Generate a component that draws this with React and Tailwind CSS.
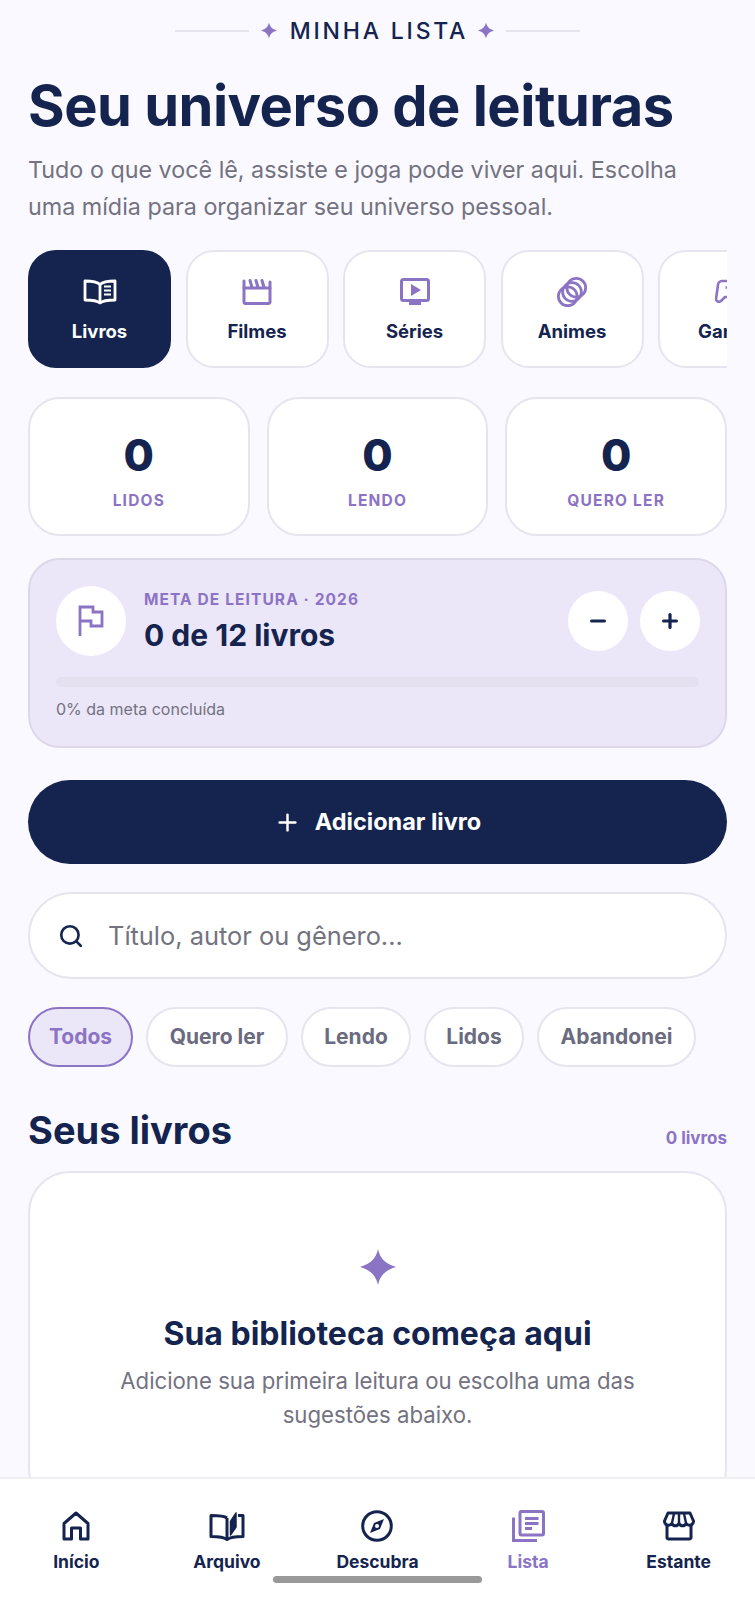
import React from 'react';
import { Plus, Search, Minus } from 'lucide-react';

const tabs = [
  { label: 'Livros', icon: BookIcon, active: true },
  { label: 'Filmes', icon: FilmIcon },
  { label: 'Séries', icon: TvIcon },
  { label: 'Animes', icon: RingsIcon },
  { label: 'Games', icon: GameIcon },
];

const chips = [
  { label: 'Todos', w: 'w-[105px]', active: true },
  { label: 'Quero ler', w: 'w-[142px]' },
  { label: 'Lendo', w: 'w-[110px]' },
  { label: 'Lidos', w: 'w-[100px]' },
  { label: 'Abandonei', w: 'w-[159px]' },
];

const navItems = [
  { label: 'Início', icon: HomeIcon },
  { label: 'Arquivo', icon: ArchiveIcon },
  { label: 'Descubra', icon: CompassIcon },
  { label: 'Lista', icon: ListIcon, active: true },
  { label: 'Estante', icon: StoreIcon },
];

function BookIcon() {
  return (
    <svg width="34" height="26" viewBox="0 0 34 26" fill="none" stroke="currentColor" strokeWidth="2.8" strokeLinejoin="round">
      <path d="M17 5.500C14.500 3 10 2 2 2v19c8 0 12.500 .8 15 3 2.500-2.200 7-3 15-3V2C24 2 19.500 3 17 5.500z" />
      <path d="M17 5.500V24" />
      <path d="M21 7.500h7M21 11.500h7M21 15.500h7" strokeWidth="2.200" />
    </svg>
  );
}

function FilmIcon() {
  return (
    <svg width="30" height="26" viewBox="0 0 30 26" fill="none" stroke="currentColor" strokeWidth="3" strokeLinejoin="round">
      <path d="M2 9h26v14a1.500 1.500 0 0 1-1.500 1.500h-23A1.500 1.500 0 0 1 2 23z" />
      <path d="M2 9V2M28 9V3M8 1.500l2 7M14 1.500l2 7M20 1.500l2 7" strokeLinecap="round" />
    </svg>
  );
}

function TvIcon() {
  return (
    <svg width="30" height="28" viewBox="0 0 30 28" fill="none">
      <rect x="1.500" y="1.500" width="27" height="21" rx="2" stroke="currentColor" strokeWidth="3" />
      <path d="M11 6 21 12 11 18z" fill="currentColor" />
      <path d="M9 25.500h12" stroke="currentColor" strokeWidth="3" />
    </svg>
  );
}

function RingsIcon() {
  return (
    <svg width="32" height="32" viewBox="0 0 30 30" fill="none" stroke="currentColor" strokeWidth="2.600">
      <circle cx="11" cy="19" r="8.800" />
      <circle cx="15" cy="15" r="8.800" />
      <circle cx="19" cy="11" r="8.800" />
    </svg>
  );
}

function GameIcon() {
  return (
    <svg width="30" height="28" viewBox="0 0 30 28" fill="none" stroke="currentColor" strokeWidth="2.600" strokeLinejoin="round">
      <path d="M7 3h17a4 4 0 0 1 4 4l1 14a3 3 0 0 1-5 2l-4-4H10l-4 4a3 3 0 0 1-5-2L3 7a4 4 0 0 1 4-4z" />
      <path d="M14 6v7M10.500 9.500h7" />
    </svg>
  );
}

function FlagIcon() {
  return (
    <svg width="26" height="32" viewBox="0 0 26 32" fill="none" stroke="currentColor" strokeWidth="2.800" strokeLinejoin="miter">
      <path d="M2 31V2h13v5h9v14H13v-5H2" />
    </svg>
  );
}

function HomeIcon() {
  return (
    <svg width="28" height="30" viewBox="0 0 28 30" fill="none" stroke="currentColor" strokeWidth="3" strokeLinejoin="round">
      <path d="M2 12.500 14 2l12 10.500V28h-7.500V17h-9v11H2z" />
    </svg>
  );
}

function ArchiveIcon() {
  return (
    <svg width="36" height="32" viewBox="0 0 36 32" fill="none" stroke="currentColor" strokeWidth="3" strokeLinejoin="round">
      <path d="M18 8C15.500 6 10 5.500 2 5.500v21c8 0 13 .5 16 3 3-2.500 8-3 16-3v-21h-5" />
      <path d="M18 8v21" />
      <path d="M21.500 25V11.500L27 3v14z" fill="currentColor" strokeWidth="1.500" />
    </svg>
  );
}

function CompassIcon() {
  return (
    <svg width="32" height="32" viewBox="0 0 32 32" fill="none">
      <circle cx="16" cy="16" r="14.300" stroke="currentColor" strokeWidth="3" />
      <path d="M23 9 19 19 9 23 13 13z" fill="currentColor" />
      <circle cx="16" cy="16" r="2" fill="white" />
    </svg>
  );
}

function ListIcon() {
  return (
    <svg width="33" height="32" viewBox="0 0 33 32" fill="none" stroke="currentColor" strokeWidth="3">
      <rect x="8" y="1.500" width="23.500" height="23.500" rx="1.500" />
      <path d="M1.500 7.500V30.500H25" />
      <path d="M13 8.500h13.500M13 13.500h13.500M13 18.500h7" />
    </svg>
  );
}

function StoreIcon() {
  return (
    <svg width="32" height="30" viewBox="0 0 32 30" fill="none" stroke="currentColor" strokeWidth="3" strokeLinejoin="round">
      <path d="M5 2h22l3.500 8a4 4 0 0 1-7.300 2.500 4 4 0 0 1-7.200 0 4 4 0 0 1-7.200 0A4 4 0 0 1 1.500 10z" />
      <path d="M11 2.500 9 12M16 2.500V12M21 2.500 23 12" strokeWidth="2.400" />
      <path d="M4 14v12.500A1.500 1.500 0 0 0 5.500 28h21a1.500 1.500 0 0 0 1.500-1.500V14" />
    </svg>
  );
}

function Sparkle({ className }) {
  return (
    <svg className={className} viewBox="0 0 24 24" fill="currentColor">
      <path d="M12 0c1.500 6.500 4.500 9.500 12 12-7.500 2.500-10.500 5.500-12 12-1.500-6.500-4.500-9.500-12-12 7.500-2.500 10.500-5.500 12-12z" />
    </svg>
  );
}

export default function App() {
  return (
    <div className="relative h-[1600px] w-[755px] overflow-hidden bg-[#faf9ff] font-['Inter',sans-serif] text-[#14244f]">
      <div className="flex h-[41px] items-center justify-center pt-[20px]">
        <div className="h-[2px] w-[74px] bg-[#e6e4ee]" />
        <Sparkle className="ml-[12px] h-[17px] w-[16px] text-[#8b74c4]" />
        <span className="ml-[13px] mr-[10px] text-[23px] leading-[20px] font-medium tracking-[2.800px]">MINHA LISTA</span>
        <Sparkle className="mr-[12px] h-[17px] w-[16px] text-[#8b74c4]" />
        <div className="h-[2px] w-[74px] bg-[#e6e4ee]" />
      </div>

      <div className="px-[28px]">
        <h1 className="mt-[33px] text-[56px] leading-[64px] font-bold tracking-[-0.5px]">Seu universo de leituras</h1>
        <p className="mt-[13px] text-[23.300px] leading-[37px] text-[#73727f]">
          Tudo o que você lê, assiste e joga pode viver aqui. Escolha uma mídia para organizar seu universo pessoal.
        </p>

        <div className="mt-[25px] flex gap-[14.500px] overflow-hidden">
          {tabs.map((tab) => (
            <div
              key={tab.label}
              className={`flex h-[118px] w-[143px] shrink-0 flex-col items-center rounded-[28px] border-2 pt-[24px] ${tab.active ? 'border-[#14244f] bg-[#14244f] text-white' : 'border-[#e6e4ee] bg-white text-[#14244f]'}`}
            >
              <span className={`flex h-[32px] items-center justify-center ${tab.active ? '' : 'text-[#8b74c4]'}`}>
                <tab.icon />
              </span>
              <span className="mt-[11px] text-[18.500px] leading-[24px] font-bold">{tab.label}</span>
            </div>
          ))}
        </div>

        <div className="mt-[29px] grid grid-cols-3 gap-[17px]">
          {['LIDOS', 'LENDO', 'QUERO LER'].map((label) => (
            <div key={label} className="flex h-[139px] flex-col items-center rounded-[32px] border-2 border-[#e6e4ee] bg-white pt-[30px]">
              <span className="text-[44px] leading-[52px] font-extrabold">0</span>
              <span className="mt-[10px] text-[15.500px] leading-[20px] font-bold tracking-[1.200px] text-[#8b74c4]">{label}</span>
            </div>
          ))}
        </div>

        <div className="mt-[22px] h-[190px] rounded-[32px] border-2 border-[#dcd8ea] bg-[#ece7f8] px-[26px] pt-[26px]">
          <div className="flex items-center">
            <div className="flex h-[70px] w-[70px] items-center justify-center rounded-full bg-white text-[#8b74c4]">
              <FlagIcon />
            </div>
            <div className="ml-[18px]">
              <div className="text-[15.500px] leading-[20px] font-bold tracking-[1.100px] text-[#8b74c4]">META DE LEITURA · 2026</div>
              <div className="mt-[7px] text-[30px] leading-[36px] font-bold">0 de 12 livros</div>
            </div>
            <div className="ml-auto -mr-[1px] flex gap-[12px]">
              <div className="flex h-[60px] w-[60px] items-center justify-center rounded-full bg-white"><Minus size={22} strokeWidth={3.500} /></div>
              <div className="flex h-[60px] w-[60px] items-center justify-center rounded-full bg-white"><Plus size={22} strokeWidth={3.500} /></div>
            </div>
          </div>
          <div className="mt-[21px] h-[10px] rounded-full bg-[#e4e0f0]" />
          <div className="mt-[12px] text-[16px] leading-[20px] text-[#73727f]">0% da meta concluída</div>
        </div>

        <div className="mt-[32px] flex h-[84px] items-center justify-center gap-[14px] rounded-full bg-[#14244f] text-white">
          <Plus size={27} strokeWidth={2.200} />
          <span className="text-[23.500px] leading-[30px] font-bold">Adicionar livro</span>
        </div>

        <div className="mt-[28px] flex h-[87px] items-center rounded-full border-2 border-[#e6e4ee] bg-white pl-[28px]">
          <Search size={26} strokeWidth={2.400} />
          <span className="ml-[24px] text-[25.400px] leading-[32px] text-[#73727f]">Título, autor ou gênero...</span>
        </div>

        <div className="mt-[28px] flex gap-[13px]">
          {chips.map((chip) => (
            <div
              key={chip.label}
              className={`flex h-[60px] items-center justify-center rounded-full border-2 text-[21px] font-bold ${chip.w} ${chip.active ? 'border-[#8b74c4] bg-[#ece7f8] text-[#8b74c4]' : 'border-[#e6e4ee] bg-white text-[#6b6b80]'}`}
            >
              {chip.label}
            </div>
          ))}
        </div>

        <div className="mt-[39px] flex items-end justify-between">
          <h2 className="text-[38px] leading-[48px] font-bold">Seus livros</h2>
          <span className="mb-[6px] text-[17px] leading-[20px] font-bold text-[#8b74c4]">0 livros</span>
        </div>

        <div className="mt-[17px] flex h-[340px] flex-col items-center rounded-[42px] border-2 border-[#e6e4ee] bg-white pt-[75px] text-center">
          <Sparkle className="h-[38px] w-[36px] text-[#8b74c4]" />
          <h3 className="mt-[28px] text-[32px] leading-[40px] font-bold">Sua biblioteca começa aqui</h3>
          <p className="mt-[10px] w-[560px] text-[22.200px] leading-[33.500px] text-[#73727f]">
            Adicione sua primeira leitura ou escolha uma das sugestões abaixo.
          </p>
        </div>
      </div>

      {/* bottom nav sits on top of the empty-state card */}
      <nav className="absolute inset-x-0 bottom-0 h-[123px] border-t-2 border-[#efeef3] bg-white">
        <div className="grid grid-cols-5 px-[1px] pt-[30px]">
          {navItems.map((item) => (
            <div key={item.label} className={`flex flex-col items-center ${item.active ? 'text-[#8b74c4]' : 'text-[#14244f]'}`}>
              <span className="flex h-[34px] items-center justify-center"><item.icon /></span>
              <span className="mt-[7px] text-[17.500px] leading-[24px] font-bold">{item.label}</span>
            </div>
          ))}
        </div>
        <div className="absolute bottom-[17px] left-[273px] h-[7px] w-[209px] rounded-full bg-[#999999]" />
      </nav>
    </div>
  );
}
